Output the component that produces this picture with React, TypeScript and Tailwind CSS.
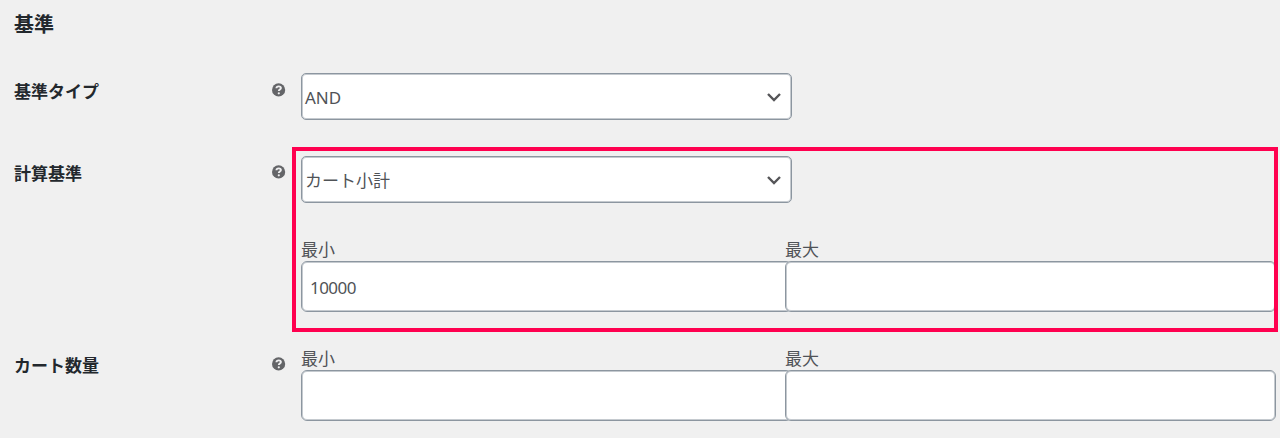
import React from 'react';

interface RowProps {
  label: string;
  className: string;
  labelOffset: string;
  iconOffset: string;
  children: React.ReactNode;
}

const HelpTip: React.FC = () => (
  <svg viewBox="0 0 14 14" className="h-3.5 w-3.5">
    <circle cx="6.6" cy="6.9" r="6.6" fill="#646568" />
    <path
      d="M4.4 5.3C4.5 4 5.4 3.4 6.7 3.4c1.3 0 2.2.7 2.2 1.7 0 1.4-2.1 1.5-2.1 3"
      fill="none"
      stroke="#f0f0f1"
      strokeWidth="1.9"
    />
    <circle cx="6.8" cy="10.3" r="1.1" fill="#f0f0f1" />
  </svg>
);

const Row: React.FC<RowProps> = ({ label, className, labelOffset, iconOffset, children }) => (
  <div className={`flex ${className}`}>
    <div className={`w-[258px] shrink-0 text-[17px] leading-6 font-bold text-[#23282d] ${labelOffset}`}>
      {label}
    </div>
    <div className={`w-[29px] shrink-0 ${iconOffset}`}>
      <HelpTip />
    </div>
    <div className="w-[975px] shrink-0">{children}</div>
  </div>
);

const SelectBox: React.FC<{ value: string }> = ({ value }) => (
  <button className="flex h-[47px] w-[491px] items-center justify-between rounded-[5px] border border-[#8c96a0] bg-white pt-0.5 pr-[9px] pl-[3px] text-left text-[17px] shadow-[inset_0_0_0_1px_#8c96a080]">
    <span>{value}</span>
    <svg viewBox="0 0 16 12" className="mb-px h-3 w-4">
      <path d="M2 3l6 6 6-6" fill="none" stroke="#555558" strokeWidth="2.4" />
    </svg>
  </button>
);

const RangeFields: React.FC<{ min?: string; max?: string }> = ({ min = '', max = '' }) => (
  <div className="grid grid-cols-[484px_491px]">
    {[
      { label: '最小', value: min },
      { label: '最大', value: max },
    ].map((field) => (
      <label key={field.label} className="block">
        <span className="block h-[21px] text-[17px] leading-[19px]">{field.label}</span>
        <input
          type="text"
          defaultValue={field.value}
          className="relative block h-[51px] w-[491px] rounded-[6px] border border-[#8c96a0] bg-white px-2 pt-0.5 text-[17px] tracking-[-0.55px] shadow-[inset_0_0_0_1px_#8c96a080]"
        />
      </label>
    ))}
  </div>
);

const App: React.FC = () => {
  return (
    <main className="relative h-[438px] w-[1280px] overflow-hidden bg-[#f0f0f0] pt-[9px] pl-3.5 font-['Noto_Sans','Noto_Sans_CJK_JP',sans-serif] text-[#505357]">
      <h2 className="h-[64px] pt-px text-[20px] leading-[30px] font-bold text-[#23282d]">基準</h2>

      <Row label="基準タイプ" className="h-[83px]" labelOffset="pt-[7px]" iconOffset="pt-2.5">
        <SelectBox value="AND" />
      </Row>

      <Row label="計算基準" className="h-[193px]" labelOffset="pt-1.5" iconOffset="pt-[9px]">
        <SelectBox value="カート小計" />
        <div className="pt-[37px]">
          <RangeFields min="10000" />
        </div>
      </Row>

      <Row label="カート数量" className="h-[89px]" labelOffset="pt-[5px]" iconOffset="pt-2">
        <RangeFields />
      </Row>

      {/* highlight frame around the calculation settings */}
      <div className="pointer-events-none absolute top-[147px] left-[292px] h-[185px] w-[986px] border-4 border-[#ff004f]" />
    </main>
  );
};

export default App;
